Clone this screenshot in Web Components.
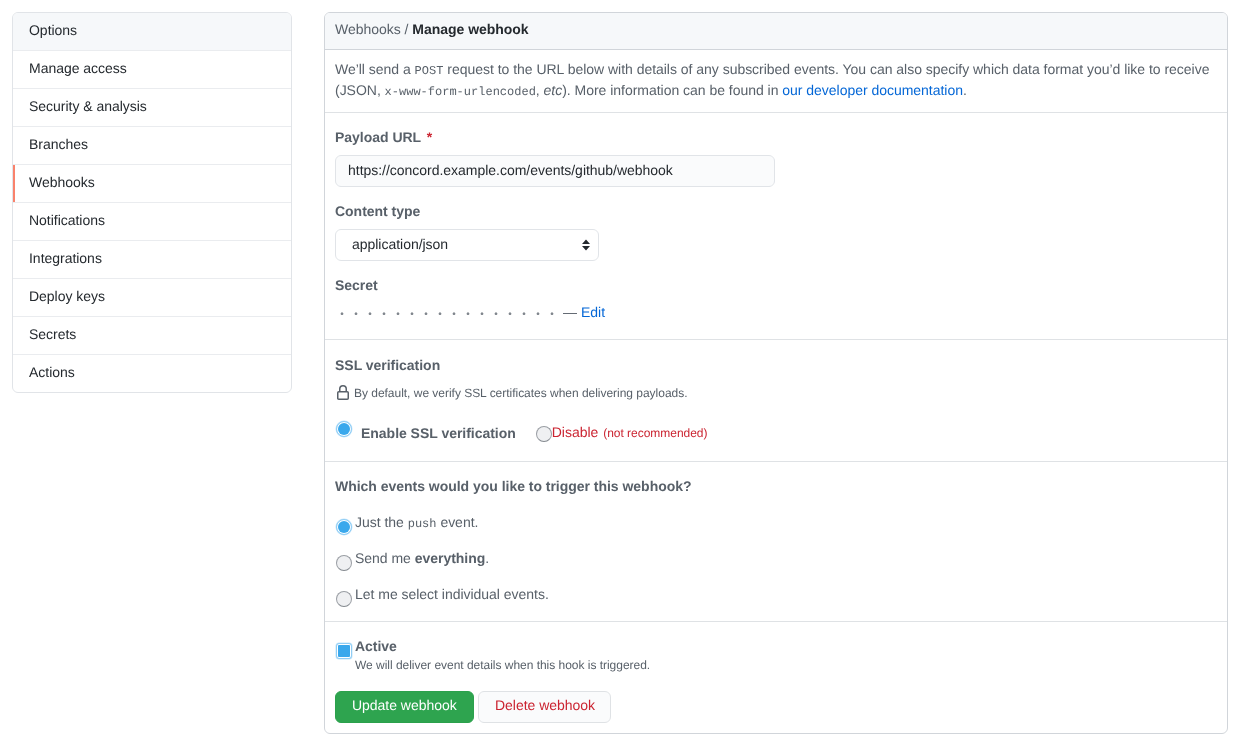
<!DOCTYPE html>
<html lang="en">
<head>
<meta charset="utf-8">
<title>Manage webhook</title>
<style>
html,body{margin:0;padding:0;background:#fff}
body{font:14px/21px "Liberation Sans",Arial,sans-serif;color:#24292e;text-rendering:geometricPrecision;letter-spacing:-.025px}
</style>
</head>
<body>
<settings-page>
  <side-menu slot="side">
    <menu-row first>Options</menu-row>
    <menu-row>Manage access</menu-row>
    <menu-row>Security &amp; analysis</menu-row>
    <menu-row>Branches</menu-row>
    <menu-row selected>Webhooks</menu-row>
    <menu-row>Notifications</menu-row>
    <menu-row>Integrations</menu-row>
    <menu-row>Deploy keys</menu-row>
    <menu-row>Secrets</menu-row>
    <menu-row last>Actions</menu-row>
  </side-menu>
  <webhook-form slot="main"></webhook-form>
</settings-page>

<script>
function def(name, html){
  customElements.define(name, class extends HTMLElement{
    constructor(){
      super();
      this.attachShadow({mode:'open'}).innerHTML = html;
    }
  });
}
def('settings-page', `<style>
:host{display:flex;gap:32px;padding:12px 14px 19px 12px;box-sizing:border-box;width:1242px;align-items:flex-start;will-change:transform}
::slotted([slot=side]){flex:0 0 280px}
::slotted([slot=main]){flex:0 0 904px}
</style><slot name="side"></slot><slot name="main"></slot>`);

def('side-menu', `<style>
:host{display:block;border:1px solid #e1e4e8;border-radius:6px;box-sizing:border-box;overflow:hidden}
</style><slot></slot>`);

def('menu-row', `<style>
:host{display:block;height:38px;box-sizing:border-box;padding:7px 16px 0;border-bottom:1px solid #eaecef;line-height:21px;color:#24292e;position:relative}
:host([first]){background:#f6f8fa}
:host([last]){height:37px;border-bottom:0}
:host([selected])::before{content:"";position:absolute;left:0;top:0;bottom:0;width:2px;background:#f9826c}
</style><slot></slot>`);

def('radio-mark', `<style>
:host{display:inline-block;width:16px;height:16px;box-sizing:border-box;border-radius:50%;background:#eff0f2;border:1.5px solid #9a9ea4;border-bottom-color:#858a90;flex:none}
:host([on]){background:#3aa8ec content-box;padding:1px;border:1.5px solid #8fcdf5;box-shadow:0 0 0 .5px #c4e5fa}
:host([box]){border-radius:3px}
</style>`);

def('hook-section', `<style>
:host{display:block;border-bottom:1px solid #dfe2e5;padding:0 10px;box-sizing:border-box}
:host([end]){border-bottom:0}
</style><slot></slot>`);

def('webhook-form', `<style>
:host{display:block;border:1px solid #d1d5da;border-radius:6px;box-sizing:border-box;height:722px;overflow:hidden;color:#586069;font-size:14px;line-height:21px}
*{box-sizing:border-box}
a{color:#0366d6;text-decoration:none}
code{font:12px/18px "Liberation Mono",monospace;letter-spacing:0}
.head{height:37px;background:#f6f8fa;border-bottom:1px solid #d1d5da;padding:6px 10px 0;line-height:21px}
.head b{color:#24292e;font-weight:700}
.intro{height:62px;padding:9px 10px 0}
.lab{font-weight:700;line-height:21px;display:block}
.req{color:#cb2431;margin-left:2px}
.form{height:226px;padding-top:14px}
.input{width:440px;height:32px;border:1px solid #e1e4e8;border-radius:6px;background:#fafbfc;color:#24292e;padding:4px 12px 0;margin:7px 0 14px}
.select{width:264px;height:32px;border:1px solid #e1e4e8;border-radius:6px;background:#fff;color:#24292e;padding:4px 0 0 16px;margin:7px 0 14px;display:flex;justify-content:space-between}
.select svg{margin:5px 8px 0 0}
.secret{display:flex;margin-top:6px;line-height:21px;height:21px;align-items:center}
.dots{display:flex;gap:0;width:228px;color:#80868d}
.dots span{width:14px;text-align:center;font-size:10px;line-height:21px;margin-top:3px}
.dash{margin-right:4px}
.ssl{height:121px;padding-top:15px}
.small{font-size:12px;line-height:18px}
.lock{display:flex;align-items:center;margin-top:7px;gap:3px;height:20px}
.lock svg{fill:#586069;flex:none}
.sslopts{display:flex;align-items:center;margin-top:15px;padding-left:1px;height:24px}
.sslopts .en{font-weight:700;margin-left:9px;margin-right:20px;position:relative;top:3px}
.sslopts radio-mark:first-child{position:relative;top:-1px}
.dis{color:#cb2431;position:relative;top:3px}
.dis small{font-size:12px;margin-left:1px}
.sslopts radio-mark:nth-of-type(2){position:relative;top:4px}
.events{height:159px;padding-top:14px}
.ev{display:flex;padding-left:1px;margin-top:0;height:36px;align-items:flex-start}
.ev radio-mark{margin-top:7px}
.evs{margin-top:15px}
.ev span{margin-left:3px;line-height:21px}
.ev b{font-weight:700}
.active{padding-top:14px;height:112px}
.acrow{display:flex;padding-left:1px;height:40px}
.acrow radio-mark{margin-top:7px}
.acrow div{margin-left:3px}
.acrow .lab{line-height:21px}
.acrow .small{display:block;margin-top:0;line-height:16px;font-size:12px}
.btns{display:flex;gap:4px;margin-top:15px}
.btn{height:32px;border-radius:6px;border:1px solid #dfe2e5;padding:3px 16px 0;line-height:21px;background:#fafbfc;color:#cb2431;white-space:nowrap}
.btn.del{width:133px}
.btn.go{background:#2ea44f;border-color:#2ba14c;color:#fff;width:139px}
</style>
<div class="head">Webhooks / <b>Manage webhook</b></div>
<hook-section style="padding:0"><div class="intro">We’ll send a <code>POST</code> request to the URL below with details of any subscribed events. You can also specify which data format you’d like to receive (JSON, <code>x-www-form-urlencoded</code>, <em>etc</em>). More information can be found in <a>our developer documentation</a>.</div></hook-section>
<hook-section><div class="form">
  <span class="lab">Payload URL <span class="req">*</span></span>
  <div class="input">https://concord.example.com/events/github/webhook</div>
  <span class="lab">Content type</span>
  <div class="select">application/json<svg width="8" height="12" viewBox="0 0 8 12"><path fill="#24292e" d="M4 0.5 8 5H0zM4 11.5 0 7h8z"/></svg></div>
  <span class="lab">Secret</span>
  <div class="secret"><span class="dots"><span>•</span><span>•</span><span>•</span><span>•</span><span>•</span><span>•</span><span>•</span><span>•</span><span>•</span><span>•</span><span>•</span><span>•</span><span>•</span><span>•</span><span>•</span><span>•</span></span><span class="dash">—</span><a>Edit</a></div>
</div></hook-section>
<hook-section><div class="ssl">
  <span class="lab">SSL verification</span>
  <div class="lock small"><svg width="16" height="16" viewBox="0 0 16 16"><path fill-rule="evenodd" d="M4 4v2h-.25A1.75 1.75 0 002 7.75v5.5c0 .966.784 1.75 1.75 1.75h8.5A1.75 1.75 0 0014 13.25v-5.5A1.75 1.75 0 0012.25 6H12V4a4 4 0 10-8 0zm6.5 2V4a2.5 2.5 0 00-5 0v2h5zM12 7.5h.25a.25.25 0 01.25.25v5.5a.25.25 0 01-.25.25h-8.5a.25.25 0 01-.25-.25v-5.5a.25.25 0 01.25-.25H12z"/></svg>By default, we verify SSL certificates when delivering payloads.</div>
  <div class="sslopts"><radio-mark on></radio-mark><span class="en">Enable SSL verification</span><radio-mark></radio-mark><span class="dis">Disable <small>(not recommended)</small></span></div>
</div></hook-section>
<hook-section><div class="events">
  <span class="lab">Which events would you like to trigger this webhook?</span>
  <div class="ev evs"><radio-mark on></radio-mark><span>Just the <code>push</code> event.</span></div>
  <div class="ev"><radio-mark></radio-mark><span>Send me <b>everything</b>.</span></div>
  <div class="ev"><radio-mark></radio-mark><span>Let me select individual events.</span></div>
</div></hook-section>
<hook-section end><div class="active">
  <div class="acrow"><radio-mark on box></radio-mark><div><span class="lab">Active</span><span class="small">We will deliver event details when this hook is triggered.</span></div></div>
  <div class="btns"><div class="btn go">Update webhook</div><div class="btn del">Delete webhook</div></div>
</div></hook-section>`);
</script>
</body>
</html>
